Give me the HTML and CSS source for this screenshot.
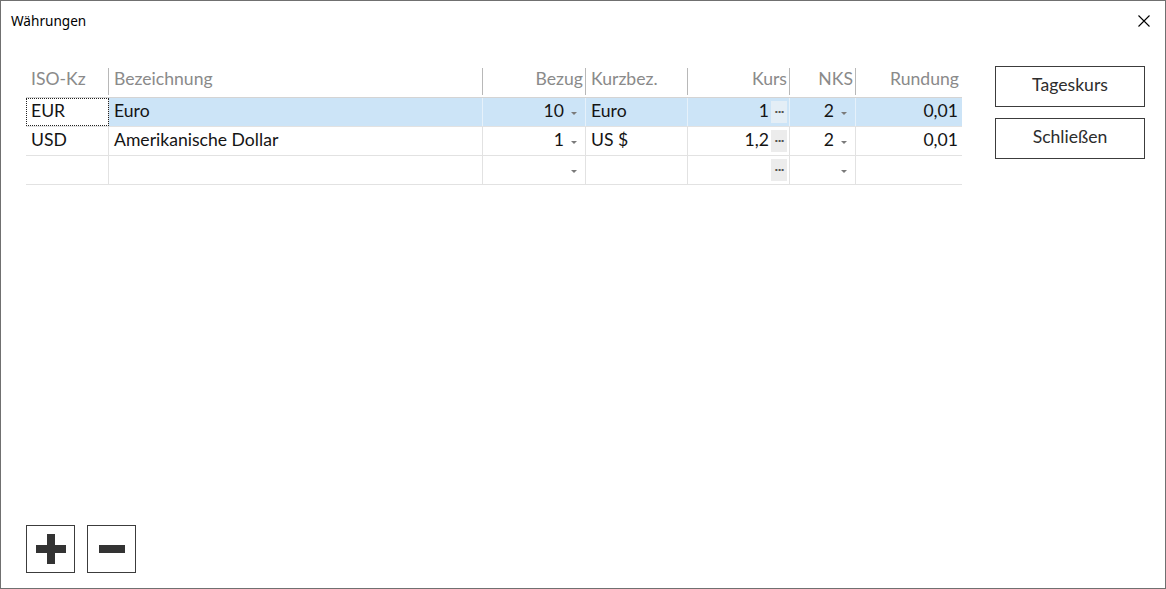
FILE: index.html
```html
<!DOCTYPE html>
<html lang="de">
<head>
<meta charset="utf-8">
<title>Währungen</title>
<link rel="stylesheet" href="styles.css">
</head>
<body>
<div class="window">
  <div class="titlebar">
    <span class="title">Währungen</span>
    <svg class="close" width="12" height="12" viewBox="0 0 12 12"><path d="M0.5 0.5 L11.5 11.5 M11.5 0.5 L0.5 11.5" stroke="#000" stroke-width="1.1" fill="none"/></svg>
  </div>
  <div class="content">
    <div class="main">
      <div class="grid">
        <div class="row head">
          <div class="cell c1 left sep">ISO-Kz</div>
          <div class="cell c2 left sep">Bezeichnung</div>
          <div class="cell c3 right sep">Bezug</div>
          <div class="cell c4 left sep">Kurzbez.</div>
          <div class="cell c5 right sep">Kurs</div>
          <div class="cell c6 right sep">NKS</div>
          <div class="cell c7 right">Rundung</div>
        </div>
        <div class="row body selected">
          <div class="cell c1 left focus">EUR</div>
          <div class="cell c2 left">Euro</div>
          <div class="cell c3 right drop"><span>10</span><i class="arrow"></i></div>
          <div class="cell c4 left">Euro</div>
          <div class="cell c5 right dots"><span>1</span><b class="ell">···</b></div>
          <div class="cell c6 right drop"><span>2</span><i class="arrow"></i></div>
          <div class="cell c7 right">0,01</div>
        </div>
        <div class="row body">
          <div class="cell c1 left">USD</div>
          <div class="cell c2 left">Amerikanische Dollar</div>
          <div class="cell c3 right drop"><span>1</span><i class="arrow"></i></div>
          <div class="cell c4 left">US $</div>
          <div class="cell c5 right dots"><span>1,2</span><b class="ell">···</b></div>
          <div class="cell c6 right drop"><span>2</span><i class="arrow"></i></div>
          <div class="cell c7 right">0,01</div>
        </div>
        <div class="row body">
          <div class="cell c1 left"></div>
          <div class="cell c2 left"></div>
          <div class="cell c3 right drop"><span></span><i class="arrow"></i></div>
          <div class="cell c4 left"></div>
          <div class="cell c5 right dots"><span></span><b class="ell">···</b></div>
          <div class="cell c6 right drop"><span></span><i class="arrow"></i></div>
          <div class="cell c7 right"></div>
        </div>
      </div>
      <div class="bottom">
        <button class="sq" aria-label="Hinzufügen">
          <svg width="30" height="30" viewBox="0 0 30 30"><path d="M11 0 H19 V11 H30 V19 H19 V30 H11 V19 H0 V11 H11 Z" fill="#333"/></svg>
        </button>
        <button class="sq" aria-label="Entfernen">
          <svg width="26" height="8" viewBox="0 0 26 8"><rect x="0" y="0" width="26" height="8" fill="#333"/></svg>
        </button>
      </div>
    </div>
    <div class="side">
      <button class="btn">Tageskurs</button>
      <button class="btn">Schließen</button>
    </div>
  </div>
</div>
</body>
</html>
```

FILE: styles.css
```css
* { box-sizing: border-box; }
html, body { margin: 0; padding: 0; background: #fff; }
body { font-family: Lato, "Noto Sans", sans-serif; }

.window {
  width: 1166px;
  height: 589px;
  border: 1px solid #707070;
  display: flex;
  flex-direction: column;
  background: #fff;
}

.titlebar {
  height: 37px;
  display: flex;
  align-items: center;
  justify-content: space-between;
  padding: 0 15px 0 10px;
  flex: none;
}
.title {
  font-family: "Noto Sans", sans-serif;
  font-size: 13.6px;
  color: #000;
  position: relative;
  top: 1px;
}
.close { display: block; position: relative; top: 1px; }

.content {
  flex: 1;
  display: flex;
  padding: 28px 20px 15px 25px;
  gap: 33px;
}

.main {
  display: flex;
  flex-direction: column;
  justify-content: space-between;
  width: 936px;
}

.grid { display: flex; flex-direction: column; }
.row { display: grid; grid-template-columns: 83px 374px 103px 102px 102px 66px 106px; }
.row.head { height: 32px; border-bottom: 1px solid #d4d4d4; }
.row.body { height: 29px; border-bottom: 1px solid #e2e2e2; }

.cell {
  font-size: 17.6px;
  display: flex;
  align-items: center;
  color: #141414;
  white-space: nowrap;
  position: relative;
  padding-bottom: 4px;
}
.cell.left { justify-content: flex-start; padding-left: 5px; }
.cell.c2.left { padding-left: 5px; }
.cell.right { justify-content: flex-end; padding-right: 4px; }

.head .cell { color: #8a8a8a; padding-bottom: 7px; }
.head .cell.right { padding-right: 3px; }
.head .cell.sep::after {
  content: "";
  position: absolute;
  right: 0;
  top: 2px;
  bottom: 2px;
  width: 1px;
  background: #b8b8b8;
}
.head .c1.sep::after { right: auto; left: 82px; }

.body .cell { border-right: 1px solid #e2e2e2; }
.body .cell.c7 { border-right: none; }

.selected .cell { background: #cce4f7; border-right-color: #e6f1fa; }
.selected .cell.c1 { background: #fff; border-right-color: #e2e2e2; }
.focus { outline: 1px dotted #222; outline-offset: -1px; }

.drop { padding-right: 0 !important; }
.drop span { padding-right: 7px; }
.arrow {
  display: block;
  width: 0; height: 0;
  border-left: 3.5px solid transparent;
  border-right: 3.5px solid transparent;
  border-top: 3.5px solid #7a7a7a;
  margin-right: 8px;
  margin-top: 6px;
}

.dots { padding-right: 2px !important; padding-bottom: 0 !important; }
.dots span { padding-right: 2px; padding-bottom: 4px; }
.ell {
  display: flex;
  align-items: center;
  justify-content: center;
  width: 16px;
  height: 22px;
  background: #ececec;
  color: #555;
  font-size: 11px;
  font-weight: bold;
  letter-spacing: -1px;
  font-family: "DejaVu Sans", sans-serif;
}
.selected .ell { background: #e4eef6; }

.bottom { display: flex; gap: 12px; }
.sq {
  width: 49px;
  height: 48px;
  border: 1px solid #3c3c3c;
  background: #fff;
  display: flex;
  align-items: center;
  justify-content: center;
  padding: 0;
}
.sq svg { display: block; }

.side { display: flex; flex-direction: column; gap: 11px; }
.btn {
  width: 150px;
  height: 41px;
  border: 1px solid #3c3c3c;
  background: #fff;
  font-family: Lato, "Noto Sans", sans-serif;
  font-size: 17.6px;
  color: #2d2d2d;
  padding: 0 0 4px 0;
}
```
